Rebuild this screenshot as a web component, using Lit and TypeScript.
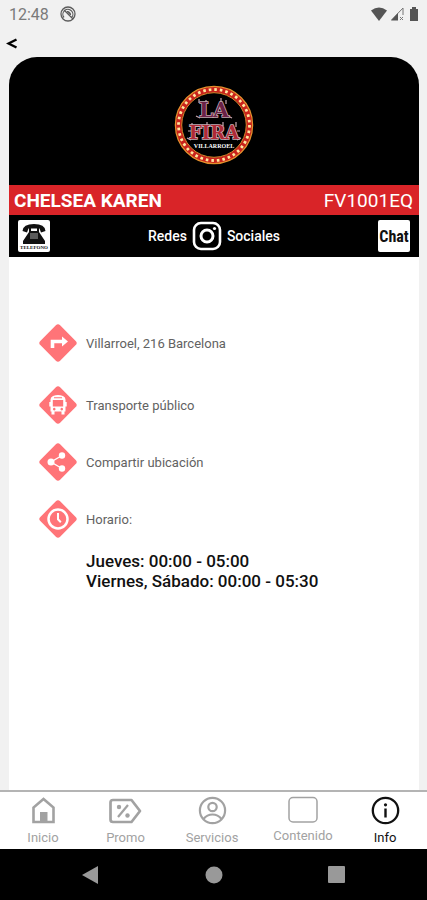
import { LitElement, html, css, svg } from "lit";
import { customElement, state } from "lit/decorators.js";

const diamond = svg`<rect x="6" y="6" width="28" height="28" rx="3" transform="rotate(45 20 20)" fill="#ff7478"/>`;

const glyphs = {
  route: svg`<path d="M14.500 25V18.500H25" fill="none" stroke="#fff" stroke-width="3.600"/><path d="M24 13.500L30 18.500L24 23.500Z" fill="#fff"/>`,
  bus: svg`<path fill="#fff" fill-rule="evenodd" d="M15 11Q20 9 25 11Q27.500 12 27.500 14.500V17H28.700V21.500H27.500V26.500H26.500V29.500H23.500V26.500H16.500V29.500H13.500V26.500H12.500V21.500H11.300V17H12.500V14.500Q12.500 12 15 11ZM14.800 15V21.500H25.200V15ZM16.200 22.800A1.300 1.300 0 1 0 16.300 22.800ZM23.700 22.800A1.300 1.300 0 1 0 23.800 22.800ZM16 12.200V13.300H24V12.200Z"/>`,
  share: svg`<path d="M24 13.500L13 20L24 26.500" fill="none" stroke="#fff" stroke-width="1.400"/><circle cx="24" cy="13.500" r="3.200" fill="#fff"/><circle cx="13" cy="20" r="3.500" fill="#fff"/><circle cx="24" cy="26.500" r="3.200" fill="#fff"/>`,
  clock: svg`<circle cx="20" cy="20" r="9.500" fill="none" stroke="#fff" stroke-width="2.500"/><path d="M20 14V20.300L22.800 23.200" fill="none" stroke="#fff" stroke-width="2"/>`,
};

const tabIcons = {
  inicio: svg`<path d="M4.500 26V11.500L14.500 3L24.500 11.500V26Z" fill="none" stroke="currentColor" stroke-width="2.600"/><path d="M11 16H18.500V26H11Z" fill="currentColor"/>`,
  promo: svg`<path d="M1.500 6.500Q1.500 4 4 4H22.500L31 15L22.500 26H4Q1.500 26 1.500 23.500Z" fill="none" stroke="currentColor" stroke-width="2.700" stroke-linejoin="round"/><path d="M9 21L19 9" stroke="currentColor" stroke-width="2.200"/><circle cx="10" cy="11" r="2.200" fill="currentColor"/><circle cx="18.500" cy="19.500" r="2.200" fill="currentColor"/>`,
  servicios: svg`<circle cx="14.500" cy="14.500" r="12.600" fill="none" stroke="currentColor" stroke-width="2.200"/><circle cx="14.500" cy="11" r="4.200" fill="none" stroke="currentColor" stroke-width="2.200"/><path d="M5.500 23Q9 18.500 14.500 18.500T23.500 23" fill="none" stroke="currentColor" stroke-width="2.200"/>`,
  contenido: svg`<rect x="1" y="1.500" width="28" height="24.500" rx="4" fill="none" stroke="currentColor" stroke-width="1.500"/>`,
  info: svg`<circle cx="14.500" cy="14.500" r="12.700" fill="none" stroke="currentColor" stroke-width="2.300"/><circle cx="14.500" cy="8.800" r="1.600" fill="currentColor"/><path d="M14.500 12.500V21.500" stroke="currentColor" stroke-width="2.400"/>`,
};

const tabs = [
  { id: "inicio", label: "Inicio", w: 29, icon: tabIcons.inicio },
  { id: "promo", label: "Promo", w: 33, icon: tabIcons.promo },
  { id: "servicios", label: "Servicios", w: 29, icon: tabIcons.servicios },
  { id: "contenido", label: "Contenido", w: 30, icon: tabIcons.contenido },
  { id: "info", label: "Info", w: 29, icon: tabIcons.info },
];

@customElement("status-bar")
class StatusBar extends LitElement {
  static styles = css`
    :host { display: flex; align-items: center; height: 28px; padding: 0 7px 0 9px; color: #7a7a7a; font-size: 16px; }
    .badge { margin-left: 11px; }
    .right { margin-left: auto; display: flex; align-items: center; gap: 3px; }
    svg { display: block; }
  `;
  render() {
    return html`
      <span>12:48</span>
      <svg class="badge" width="16" height="16" viewBox="0 0 16 16" fill="none" stroke="#5c5c5c">
        <circle cx="8" cy="8" r="7" stroke-width="1.300"/>
        <path d="M4 11.500A5 5 0 1 1 11.500 11.800M4 4L13 13" stroke-width="1.200"/>
        <path d="M7 5.500A3 3 0 0 1 10.500 9Z" fill="#5c5c5c"/>
      </svg>
      <div class="right">
        <svg width="16" height="14" viewBox="0 0 16 14"><path d="M0 3.500Q8-2.500 16 3.500L8 14Z" fill="#555"/></svg>
        <svg width="15" height="14" viewBox="0 0 15 14"><path d="M1.500 13L13 1V8" fill="none" stroke="#777"/><path d="M1 13.500L8 6V13.500Z" fill="#555"/><path d="M10 10L13 13M13 10L10 13" stroke="#777"/></svg>
        <svg width="12" height="14" viewBox="0 0 12 14"><path d="M2 2H4V0H8V2H10V14H2Z" fill="#555"/></svg>
      </div>`;
  }
}

@customElement("club-logo")
class ClubLogo extends LitElement {
  static styles = css`
    :host { display: block; }
    svg { display: block; }
    .la { font: 700 20px "DejaVu Serif", serif; }
    .fira { font: 700 18px "DejaVu Serif", serif; }
    .small { font: 700 6px "Liberation Serif", serif; }
  `;
  render() {
    return html`
      <svg width="80" height="80" viewBox="0 0 80 80" role="img" aria-label="La Fira Villarroel">
        <circle cx="40" cy="40" r="35.500" fill="none" stroke="#c9221c" stroke-width="6"/>
        <circle cx="40" cy="40" r="35.500" fill="none" stroke="#ffe9a0" stroke-width="2.800" stroke-dasharray="2.600 2.977"/>
        <circle cx="40" cy="40" r="38.600" fill="none" stroke="#e3902c" stroke-width="1.300"/>
        <circle cx="40" cy="40" r="32.300" fill="none" stroke="#e08a2c" stroke-width="1"/>
        <g text-anchor="middle">
          <path d="M25 14V18M32 15V19M47 13V18M52 15V19M22 31L26 33M54 31L58 33M18 38V42M33 37V41M49 37V41M62 37V42M13 53L17 55M63 55L67 53M14 46H17M63 46H66" stroke="#c9a9b2" stroke-width="1.200"/>
          <g stroke="#c5aab3" stroke-width="1.600" paint-order="stroke">
            <text class="la" x="40" y="32" fill="#6b2145">LA</text>
            <text class="fira" x="40" y="54" fill="#b02a36">FIRA</text>
          </g>
          <text class="small" x="40" y="63" fill="#fff">VILLARROEL</text>
        </g>
      </svg>`;
  }
}

@customElement("app-root")
class AppRoot extends LitElement {
  @state() private active = "info";

  static styles = css`
    :host { display: flex; flex-direction: column; min-height: 100vh; background: #f1f1f1; font-family: Roboto, sans-serif; color: #111; }
    svg { display: block; flex: none; }
    button { font: inherit; color: inherit; background: none; border: 0; padding: 0; margin: 0; cursor: pointer; }
    a { color: inherit; text-decoration: none; }
    h1, p { margin: 0; }
    .back { align-self: flex-start; height: 29px; padding: 0 6px; }
    .card { flex: 1; display: flex; flex-direction: column; margin: 0 8px 0 9px; background: #fff; border-radius: 28px 28px 0 0; overflow: hidden; }
    .hero { display: flex; justify-content: center; background: #000; padding: 28px 0 20px; }
    .title { display: flex; justify-content: space-between; align-items: center; height: 30px; padding: 0 6px 0 5px; background: #d92428; color: #fff; font-size: 19px; }
    .title h1 { font-size: 19px; font-weight: 700; }
    .social { display: flex; justify-content: space-between; align-items: center; height: 42px; padding: 0 9px; background: #000; color: #fff; }
    .tile { width: 32px; height: 32px; background: #fff; border-radius: 2px; color: #111; display: grid; place-items: center; }
    .tiny { font: 700 5px "Liberation Serif", serif; }
    .chatword { font: 700 16px "Liberation Sans Narrow", "Roboto Condensed", Roboto, sans-serif; }
    .networks { display: flex; align-items: center; gap: 5px; font-size: 14px; line-height: 16px; font-weight: 500; }
    .body { padding: 66px 29px 0; }
    .row { display: flex; align-items: center; gap: 8px; height: 40px; font-size: 13px; color: #626262; }
    .address { margin-bottom: 22px; }
    .actions { display: flex; flex-direction: column; align-items: flex-start; gap: 17px; }
    .hours { margin: 12px 0 0 48px; font-size: 17px; font-weight: 500; line-height: 20px; }
    .tabs { display: grid; grid-template-columns: 86fr 79fr 94fr 88fr 76fr; padding-right: 4px; height: 59px; background: #fff; border-top: 2px solid #b4b4b4; box-sizing: border-box; }
    .tab { display: flex; flex-direction: column; align-items: center; gap: 5px; padding-top: 4px; font-size: 13px; line-height: 16px; color: #a2a2a2; white-space: nowrap; }
    .tab.contenido { gap: 3px; }
    .tab.on { color: #111; }
    .system { display: flex; justify-content: space-between; align-items: center; height: 51px; padding: 0 82px 0 81px; background: #000; }
  `;

  render() {
    return html`
      <status-bar></status-bar>
      <button class="back" aria-label="Volver">
        <svg width="12" height="12" viewBox="0 0 12 12"><path d="M10.500 2.500L2.500 6.500L10.500 10.500" fill="none" stroke="#000" stroke-width="2.400"/></svg>
      </button>
      <main class="card">
        <div class="hero"><club-logo></club-logo></div>
        <div class="title"><h1>CHELSEA KAREN</h1><span>FV1001EQ</span></div>
        <div class="social">
          <button class="tile" aria-label="Teléfono">
            <svg width="30" height="30" viewBox="0 0 30 30">
              <path d="M3.500 10Q4 3 15 3T26.500 10L22 11.500L20.500 7.500H9.500L8 11.500Z" fill="#111"/>
              <path d="M10 6H12V10H18V6H20V11L26 20V23H4V20L10 11Z" fill="#111"/>
              <path d="M12 12V18M14 12V18M16 12V18M18 12V18" stroke="#ccc" stroke-width=".8"/>
              <text class="tiny" x="15" y="28" text-anchor="middle" fill="#111">TELEFONO</text>
            </svg>
          </button>
          <a class="networks" href="#redes">
            <span>Redes</span>
            <svg width="30" height="30" viewBox="0 0 30 30" fill="none" stroke="#fff">
              <rect x="2" y="2" width="26" height="26" rx="7" stroke-width="2.600"/>
              <circle cx="15" cy="15" r="6" stroke-width="3"/>
              <circle cx="22.500" cy="7.500" r="1.600" fill="#fff" stroke="none"/>
            </svg>
            <span>Sociales</span>
          </a>
          <button class="tile chatword">Chat</button>
        </div>
        <section class="body">
          <div class="row address">${this.icon(glyphs.route)}<span>Villarroel, 216 Barcelona</span></div>
          <div class="actions">
            <button class="row">${this.icon(glyphs.bus)}<span>Transporte público</span></button>
            <button class="row">${this.icon(glyphs.share)}<span>Compartir ubicación</span></button>
            <div class="row">${this.icon(glyphs.clock)}<span>Horario:</span></div>
          </div>
          <div class="hours"><p>Jueves: 00:00 - 05:00</p><p>Viernes, Sábado: 00:00 - 05:30</p></div>
        </section>
      </main>
      <nav class="tabs">
        ${tabs.map((t) => html`
          <button class="tab ${t.id} ${t.id === this.active ? "on" : ""}" @click=${() => (this.active = t.id)}>
            <svg width=${t.w} height="29" viewBox="0 0 ${t.w} 29">${t.icon}</svg>
            <span>${t.label}</span>
          </button>`)}
      </nav>
      <div class="system">
        <button aria-label="Atrás"><svg width="18" height="20" viewBox="0 0 18 20"><path d="M1 10L17 1V19Z" fill="#999"/></svg></button>
        <button aria-label="Inicio del sistema"><svg width="18" height="18" viewBox="0 0 18 18"><circle cx="9" cy="9" r="8.500" fill="#999"/></svg></button>
        <button aria-label="Recientes"><svg width="17" height="17" viewBox="0 0 17 17"><rect width="17" height="17" rx="1" fill="#999"/></svg></button>
      </div>`;
  }

  private icon(glyph: unknown) {
    return html`<svg width="40" height="40" viewBox="0 0 40 40">${diamond}${glyph}</svg>`;
  }
}
